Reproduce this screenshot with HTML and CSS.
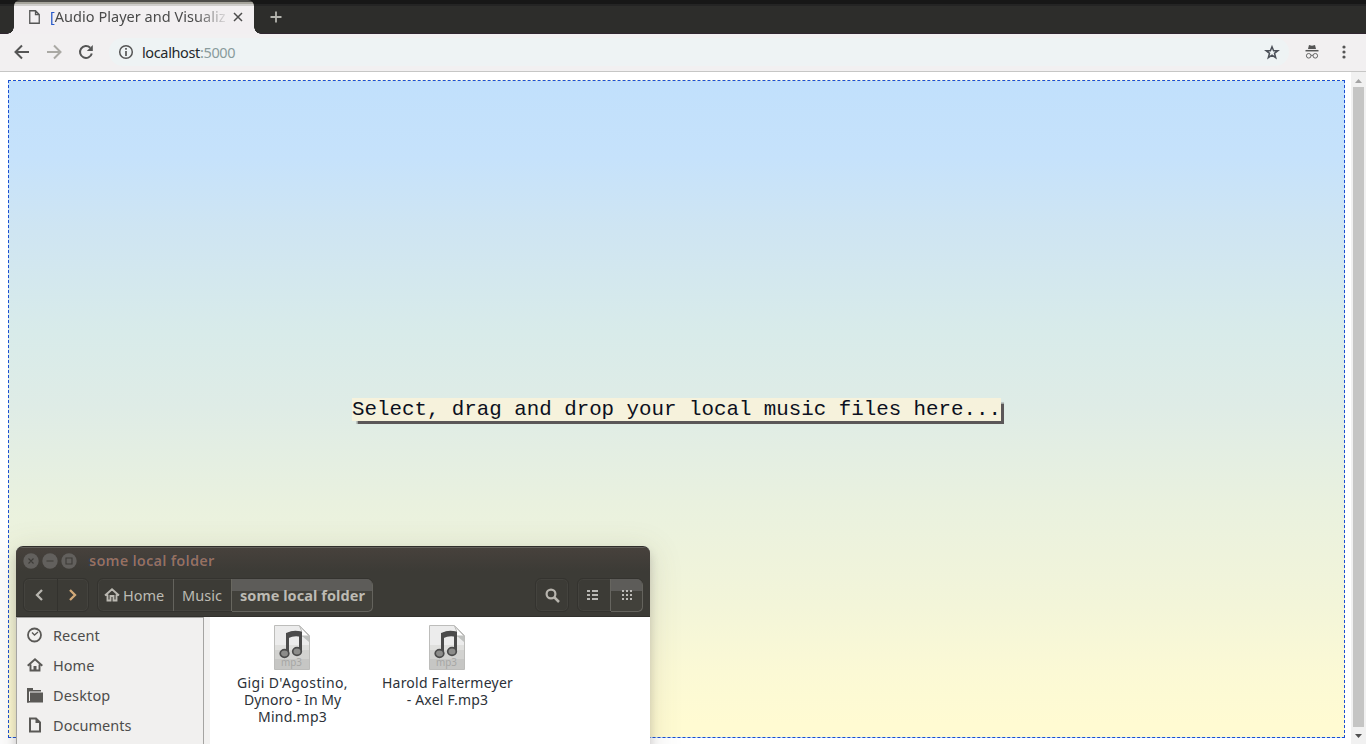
FILE: index.html
```html
<!DOCTYPE html>
<html lang="en">
<head>
<meta charset="utf-8">
<title>[Audio Player and Visualizer]</title>
<link rel="stylesheet" href="styles.css">
</head>
<body>
<svg class="defs" width="0" height="0" aria-hidden="true">
  <symbol id="mp3" viewBox="0 0 36 45">
    <path d="M.5.5H25.500L35.500 10.500V44.500H.5Z" fill="#ececec" stroke="#bdbdbb"/>
    <path d="M1 34H35V44H1Z" fill="#c6c6c4"/>
    <path d="M1 25H35V34H1Z" fill="#d2d2d0"/>
    <path d="M1 20H35V25H1Z" fill="#dfdfdd"/>
    <path d="M25.500 1L35 11H27Q29 6 25.500 1Z" fill="#fff" stroke="#bdbdbb"/>
    <path d="M28 11H35V17Z" fill="#bfc1bf"/>
    <path d="M13.500 29V9Q20 6 26.500 8V26" fill="none" stroke="#4b4b4b" stroke-width="3"/>
    <path d="M13 11Q20 7.500 27.500 9.500" fill="none" stroke="#4b4b4b" stroke-width="5"/>
    <ellipse cx="10.500" cy="28.500" rx="4.300" ry="3.800" fill="#8c8c8a" stroke="#4b4b4b" stroke-width="1.700"/>
    <ellipse cx="23" cy="26.500" rx="4.300" ry="3.800" fill="#8c8c8a" stroke="#4b4b4b" stroke-width="1.700"/>
    <text x="7" y="41" class="mp3-label" textLength="21" lengthAdjust="spacingAndGlyphs">mp3</text>
  </symbol>
</svg>
<div class="browser">
  <header class="tabstrip">
    <div class="tab">
      <svg class="page-icon" width="11" height="14" viewBox="0 0 11 14"><path d="M.75.75H6.500L10.250 4.500V13.250H.75ZM6.500.75V4.500H10.250" fill="none" stroke="#555" stroke-width="1.300"/></svg>
      <span class="tab-title"><span class="bracket">[</span>Audio Player and Visualiz</span>
      <svg class="tab-close" width="10" height="10" viewBox="0 0 10 10"><path d="M1 1L9 9M9 1L1 9" stroke="#4c4c4c" stroke-width="1.500"/></svg>
    </div>
    <svg class="new-tab" width="12" height="12" viewBox="0 0 12 12"><path d="M6 .5V11.500M.5 6H11.500" stroke="#b4b4ae" stroke-width="1.800"/></svg>
  </header>
  <nav class="toolbar">
    <svg width="16" height="16" viewBox="0 0 16 16"><path d="M15 8H2M8 1.500L1.500 8L8 14.500" fill="none" stroke="#555" stroke-width="2"/></svg>
    <svg width="16" height="16" viewBox="0 0 16 16"><path d="M1 8H14M8 1.500L14.500 8L8 14.500" fill="none" stroke="#aaa9a4" stroke-width="2"/></svg>
    <svg width="16" height="16" viewBox="0 0 16 16"><path d="M13.800 9.500A6 6 0 1 1 12.200 3.700" fill="none" stroke="#555" stroke-width="2"/><path d="M14.800 1V7H8.800Z" fill="#555"/></svg>
    <div class="address">
      <svg width="16" height="16" viewBox="0 0 16 16"><circle cx="8" cy="8" r="6.300" fill="none" stroke="#555" stroke-width="1.500"/><path d="M8 7V12M8 4V5.700" stroke="#555" stroke-width="1.700"/></svg>
      <span class="url">localhost<span class="port">:5000</span></span>
      <svg class="star" width="16" height="16" viewBox="0 0 16 16"><path d="M8 2.700L9.600 6.700H13.800L10.500 9.300L11.700 13.700L8 11.200L4.300 13.700L5.500 9.300L2.200 6.700H6.400Z" fill="none" stroke="#4b5058" stroke-width="1.500"/></svg>
    </div>
    <svg class="incognito" width="14" height="14" viewBox="0 0 14 14"><path d="M4 0L7 .7L10 0L11 4H3Z" fill="#555"/><path d="M.5 5.700H13.500" stroke="#555" stroke-width="1.500"/><circle cx="3.700" cy="10.800" r="2.300" fill="none" stroke="#666"/><circle cx="10.300" cy="10.800" r="2.300" fill="none" stroke="#666"/><path d="M6 10.300H8" stroke="#666"/></svg>
    <svg class="menu" width="4" height="14" viewBox="0 0 4 14"><circle cx="2" cy="2" r="1.600" fill="#555"/><circle cx="2" cy="7" r="1.600" fill="#555"/><circle cx="2" cy="12" r="1.600" fill="#555"/></svg>
  </nav>
  <main class="viewport">
    <section class="dropzone"><p class="prompt">Select, drag and drop your local music files here...</p></section>
    <div class="scrollbar">
      <svg width="7" height="4" viewBox="0 0 7 4"><path d="M0 4L3.500 0L7 4Z" fill="#a3a3a3"/></svg>
      <div class="thumb"></div>
      <svg width="7" height="4" viewBox="0 0 7 4"><path d="M0 0L3.500 4L7 0Z" fill="#505050"/></svg>
    </div>
  </main>
</div>
<div class="shadow-clip"><section class="folder">
  <header class="folder-head">
    <div class="titlebar">
      <svg width="54" height="16" viewBox="0 0 54 16"><g fill="#62605d"><circle cx="8" cy="8" r="7.700"/><circle cx="27" cy="8" r="7.700"/><circle cx="46" cy="8" r="7.700"/></g><path d="M5.500 5.500L10.500 10.500M10.500 5.500L5.500 10.500M23.500 8H30.500M43 5H49V11H43Z" fill="none" stroke="#3c3b37" stroke-width="1.100"/></svg>
      <span class="folder-title">some local folder</span>
    </div>
    <div class="folder-tools">
      <div class="group nav">
        <span class="cell"><svg width="8" height="12" viewBox="0 0 8 12"><path d="M7 1L2 6L7 11" fill="none" stroke="#b8b6b0" stroke-width="2.300"/></svg></span>
        <span class="cell"><svg width="8" height="12" viewBox="0 0 8 12"><path d="M1 1L6 6L1 11" fill="none" stroke="#d3aa79" stroke-width="2.300"/></svg></span>
      </div>
      <div class="group path">
        <span class="cell home"><svg width="16" height="14" viewBox="0 0 16 14"><path d="M1 7.500L8 1.300L15 7.500M3.500 6.500V12.500H6.500V8H9.500V12.500H12.500V6.500" fill="none" stroke="#bbb9b2" stroke-width="1.900"/></svg><span>Home</span></span>
        <span class="cell music">Music</span>
        <span class="cell current active">some local folder</span>
      </div>
      <div class="group search"><span class="cell"><svg width="15" height="15" viewBox="0 0 15 15"><circle cx="6" cy="6" r="4.400" fill="none" stroke="#b8b5ae" stroke-width="2.200"/><path d="M9 9L14 14" stroke="#b8b5ae" stroke-width="2.500"/></svg></span></div>
      <div class="group views">
        <span class="cell"><svg width="11" height="10" viewBox="0 0 11 10"><path d="M0 1H3M5 1H11M0 5H3M5 5H11M0 9H3M5 9H11" stroke="#b9b8b4" stroke-width="2"/></svg></span>
        <span class="cell active"><svg width="10" height="10" viewBox="0 0 10 10"><path d="M0 1H10M0 5H10M0 9H10" stroke="#bdbcb8" stroke-width="2" stroke-dasharray="2 2"/></svg></span>
      </div>
    </div>
  </header>
  <div class="folder-body">
    <aside class="places">
      <div class="place"><svg width="16" height="16" viewBox="0 0 16 16"><circle cx="7.500" cy="8" r="6.500" fill="none" stroke="#5a5956" stroke-width="1.800"/><path d="M5 5.500L7.500 8L11 5" fill="none" stroke="#5a5956" stroke-width="1.300"/></svg><span>Recent</span></div>
      <div class="place"><svg width="16" height="16" viewBox="0 0 16 16"><path d="M.7 8.700L8 2.300L15.300 8.700M3.500 7.500V13.500H12.500V7.500" fill="none" stroke="#5a5956" stroke-width="1.900"/><path d="M6.500 9H9.500V14H6.500Z" fill="#5a5956"/></svg><span>Home</span></div>
      <div class="place"><svg width="16" height="16" viewBox="0 0 16 16"><path d="M0 1H6V3H14V4.500H2V15.500H0Z" fill="#5a5956"/><path d="M3 5.500H16V15.500H0V14H3Z" fill="#5a5956"/></svg><span class="desktop">Desktop</span></div>
      <div class="place"><svg width="16" height="16" viewBox="0 0 16 16"><path d="M3 1.500H9L13 5.500V14.500H3Z" fill="none" stroke="#5a5956" stroke-width="2"/><path d="M8.500 1.500V6H13Z" fill="#5a5956"/></svg><span>Documents</span></div>
    </aside>
    <div class="files">
      <div class="file"><svg width="36" height="45"><use href="#mp3"/></svg><div class="file-name"><span class="f1">Gigi D'Agostino,</span><br><span>Dynoro - In My</span><br><span class="f3">Mind.mp3</span></div></div>
      <div class="file"><svg width="36" height="45"><use href="#mp3"/></svg><div class="file-name"><span class="f4">Harold Faltermeyer</span><br><span class="f5">- Axel F.mp3</span></div></div>
    </div>
  </div>
</section></div>
</body>
</html>
```
FILE: styles.css
```css
* { box-sizing: border-box; }
body { margin: 0; width: 1366px; height: 744px; overflow: hidden; position: relative; background: #fff; font: 14.5px/17px "Noto Sans", sans-serif; color: #333; }
svg { display: block; flex: none; }
.defs { position: absolute; }
span { white-space: nowrap; }
.browser { height: 744px; display: flex; flex-direction: column; }

.tabstrip { height: 34px; flex: none; padding-left: 14px; display: flex; background: linear-gradient(#171717 0 4px, #242424 4px 6px, #2d2d2b 6px 33px, #302630 33px); }
.tab { width: 240px; height: 34px; display: flex; align-items: center; padding: 0 11px 0 15px; position: relative; border-radius: 6px 6px 0 0; background: linear-gradient(#4d4c49 0 2px, #a6a49c 2px 4px, #cfcdcb 4px 6px, #f2eff1 6px); }
.tab::before, .tab::after { content: ""; position: absolute; bottom: 0; width: 7px; height: 7px; }
.tab::before { left: -7px; background: radial-gradient(circle at 0 0, transparent 6.5px, #f2eff1 7px); }
.tab::after { right: -7px; background: radial-gradient(circle at 100% 0, transparent 6.5px, #f2eff1 7px); }
.tab-title { margin-left: 10px; padding-bottom: 2px; width: 178px; font-size: 14.5px; letter-spacing: .03px; color: #4a4a4a; mask-image: linear-gradient(90deg, #000 145px, transparent 180px); }
.bracket { color: #2456c9; }
.tab-close { margin-left: 5px; }
.new-tab { margin: 11px 0 0 16px; }

.toolbar { height: 38px; flex: none; display: flex; align-items: center; padding: 0 20px 1px 14px; gap: 16px; background: #f2f0f1; border-bottom: 1px solid #c6c6c5; }
.address { flex: 1; height: 28px; margin-left: -1px; padding: 0 9px; border-radius: 14px; display: flex; align-items: center; background: #eef3f4; }
.url { margin-left: 8px; font-size: 14.5px; letter-spacing: -.37px; color: #24292c; }
.port { color: #899b9c; }
.star { margin-left: auto; }
.menu { margin-left: 7px; }

.viewport { flex: 1; display: flex; justify-content: space-between; min-height: 0; }
.dropzone { width: 1337px; height: 658px; margin: 8px 0 0 8px; border: 1px dashed #1a4ed2; display: flex; align-items: center; justify-content: center; background: linear-gradient(#c1e0fc 0, #c6e2fb 12%, #cfe5f2 23%, #d8ebea 38%, #dfece6 50%, #e9f1df 64%, #f3f5d9 80%, #fbf9d5 90%, #fffbd2 98%); }
.prompt { margin: 0; font: 20.8px/23px "Liberation Mono", monospace; color: #0c1020; background: #f6f2dc; box-shadow: 3px 3px 1px -.5px #5b5758; }
.scrollbar { width: 15px; display: flex; flex-direction: column; align-items: center; padding: 7px 0 6px; background: #f1f1f1; }
.thumb { width: 11px; height: 640px; margin: 4px 0 7px; background: #c5c5c4; }

.shadow-clip { position: absolute; left: 0; top: 500px; width: 720px; height: 244px; overflow: hidden; padding: 46px 0 0 16px; }
.folder { width: 634px; height: 240px; border-radius: 7px 7px 0 0; background: #fff; box-shadow: 0 6px 8px rgba(80,70,80,.25), 0 6px 30px 4px rgba(90,85,70,.13); }
.folder-head { height: 71px; border-radius: 7px 7px 0 0; border-top: 1px solid #302e2b; background: linear-gradient(#63605b 0 1px, #47413c 1px, #3c3b36 24px); border-bottom: 1px solid #31302c; }
.titlebar { height: 29px; padding: 0 0 1px 7px; display: flex; align-items: center; gap: 12px; }
.folder-title { font-weight: 600; font-size: 14.5px; letter-spacing: .25px; padding-bottom: 1px; color: #97705f; text-shadow: -1px 0 #263852; }
.folder-tools { display: flex; padding: 2px 7px 0 7px; }
.group { height: 34px; display: flex; border: 1px solid #34332f; border-radius: 6px; box-shadow: inset 0 0 0 1px #44433e; }
.cell { flex: 1; display: flex; align-items: center; justify-content: center; }
.cell + .cell { border-left: 1px solid #33322e; }
.nav { width: 66px; }
.nav .cell:first-child { padding-right: 2px; }
.path { width: 276px; margin-left: 8px; color: #bdbbb4; }
.path .cell { flex: none; }
.path .home { width: 75px; justify-content: flex-start; padding-left: 6px; gap: 3px; }
.path .music { width: 58px; border-left-color: #64635d; padding-right: 1px; letter-spacing: .05px; }
.path .current { flex: 1; border-left-color: #68675f; font-weight: 700; letter-spacing: .07px; padding-left: 1px; }
.active { background: linear-gradient(#5d5c59 0 12px, #42413b 12px); border-radius: 0 5px 5px 0; box-shadow: 1px 1px #64635d; }
.search { width: 34px; margin-left: 162px; }
.views { width: 66px; margin-left: 8px; }
.views .cell:first-child { padding-right: 2px; }
.views .active { border-left-color: #66655f; padding-left: 2px; }

.folder-body { display: flex; height: 169px; }
.places { width: 188px; padding: 2px 10px; border: 1px solid #a5a4a2; border-bottom: 0; background: #f1f0ef; }
.place { height: 30px; display: flex; align-items: center; gap: 10px; color: #4d4d4c; font-size: 14.5px; letter-spacing: .05px; }
.desktop { letter-spacing: .15px; }
.files { flex: 1; display: flex; padding: 8px 0 0 10px; border-left: 6px solid #f2f1f0; }
.file { width: 155px; display: flex; flex-direction: column; align-items: center; gap: 4px; margin-left: -6px; margin-right: 6px; }
.file-name { padding-left: 2px; text-align: center; font-size: 14px; line-height: 17px; color: #2c3138; }
.f1 { letter-spacing: .42px; }
.f3 { letter-spacing: .25px; }
.f4 { letter-spacing: .22px; }
.f5 { letter-spacing: .2px; }
.mp3-label { font: 10.5px "Noto Sans", sans-serif; fill: #a6a6a4; }
```
